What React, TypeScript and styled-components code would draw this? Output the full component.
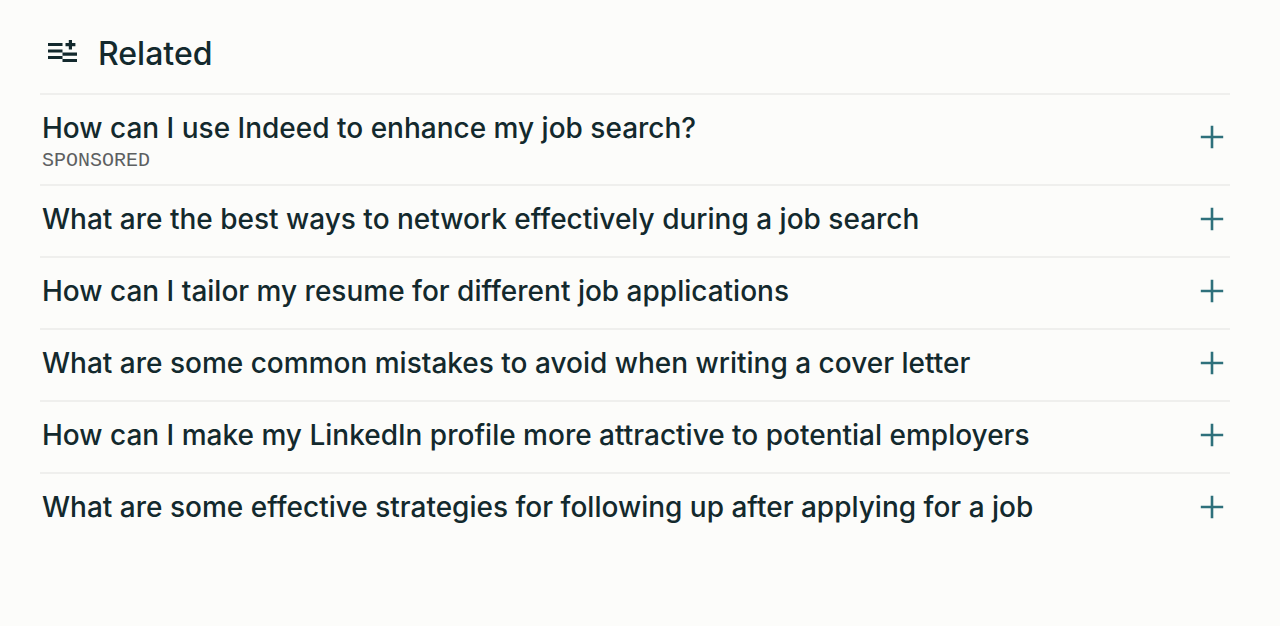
import React from "react";
import styled, { createGlobalStyle } from "styled-components";

const GlobalStyle = createGlobalStyle`
  * { box-sizing: border-box; }
  body {
    margin: 0;
    background: #fcfcfa;
    color: #13292d;
    font-family: Inter, "Liberation Sans", sans-serif;
    -webkit-font-smoothing: antialiased;
  }
`;

const Panel = styled.section`
  padding: 24px 50px 48px 40px;
`;

const Header = styled.header`
  display: flex;
  align-items: center;
  gap: 20px;
  height: 69px;
  padding: 0 8px 10px;
`;

const Title = styled.h2`
  margin: 0;
  font-size: 32px;
  line-height: 40px;
  font-weight: 500;
`;

const List = styled.ul`
  margin: 0;
  padding: 0;
  list-style: none;
`;

const Item = styled.li`
  border-top: 2px solid #efefed;
`;

const Row = styled.button<{ $sponsored?: boolean }>`
  display: flex;
  align-items: ${({ $sponsored }) => ($sponsored ? "flex-start" : "center")};
  justify-content: space-between;
  width: 100%;
  padding: 12px 6px ${({ $sponsored }) => ($sponsored ? 11 : 16)}px 2px;
  border: 0;
  background: none;
  color: inherit;
  font: inherit;
  text-align: left;
  cursor: pointer;
`;

const Copy = styled.span`
  display: flex;
  flex-direction: column;
`;

const Question = styled.span`
  font-size: 28px;
  line-height: 42px;
  font-weight: 500;
`;

const Sponsored = styled.span`
  color: #5d6061;
  font-family: "Liberation Mono", monospace;
  font-size: 20px;
  line-height: 24px;
  text-transform: uppercase;
`;

const PlusIcon = styled.svg<{ $sponsored?: boolean }>`
  flex: none;
  width: 24px;
  height: 24px;
  margin-top: ${({ $sponsored }) => ($sponsored ? 18 : 0)}px;
  stroke: #2e707b;
  stroke-width: 2.6;
`;

const RelatedIcon = styled.svg`
  flex: none;
  width: 30px;
  height: 28px;
  fill: #13292d;
`;

const questions = [
  { text: "How can I use Indeed to enhance my job search?", sponsored: true },
  { text: "What are the best ways to network effectively during a job search" },
  { text: "How can I tailor my resume for different job applications" },
  { text: "What are some common mistakes to avoid when writing a cover letter" },
  { text: "How can I make my LinkedIn profile more attractive to potential employers" },
  { text: "What are some effective strategies for following up after applying for a job" },
];

export default function App() {
  return (
    <>
      <GlobalStyle />
      <Panel aria-labelledby="related-title">
        <Header>
          <RelatedIcon viewBox="0 0 30 28" aria-hidden="true">
            <path d="M0 3h14.5v3.1H0zM0 9.5h14.5v3.1H0zM0 16h14.5v3.1H0zM14.5 12.6H29v3.1H14.5zM14.5 19H29v3.1H14.5zM20.8 0H24v3h3.4v3.2H24v3.4h-3.2V6.2h-3.3V3h3.3z" />
          </RelatedIcon>
          <Title id="related-title">Related</Title>
        </Header>
        <List>
          {questions.map(({ text, sponsored }) => (
            <Item key={text}>
              <Row type="button" $sponsored={sponsored}>
                <Copy>
                  <Question>{text}</Question>
                  {sponsored && <Sponsored>Sponsored</Sponsored>}
                </Copy>
                <PlusIcon viewBox="0 0 24 24" $sponsored={sponsored} aria-hidden="true">
                  <path d="M12 .8v22.4M.8 12h22.4" />
                </PlusIcon>
              </Row>
            </Item>
          ))}
        </List>
      </Panel>
    </>
  );
}
